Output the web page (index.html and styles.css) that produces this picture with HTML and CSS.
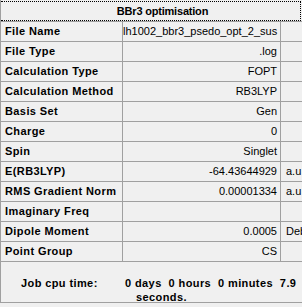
FILE: index.html
```html
<!DOCTYPE html>
<html>
<head>
<meta charset="utf-8">
<link rel="stylesheet" href="styles.css">
</head>
<body>
<div class="panel">
  <div class="header"><div class="focus">BBr3 optimisation</div></div>
  <div class="grid">
    <div class="row"><div class="k">File Name</div><div class="v">lh1002_bbr3_psedo_opt_2_sus</div><div class="u"></div></div>
    <div class="row"><div class="k">File Type</div><div class="v">.log</div><div class="u"></div></div>
    <div class="row"><div class="k">Calculation Type</div><div class="v">FOPT</div><div class="u"></div></div>
    <div class="row"><div class="k">Calculation Method</div><div class="v">RB3LYP</div><div class="u"></div></div>
    <div class="row"><div class="k">Basis Set</div><div class="v">Gen</div><div class="u"></div></div>
    <div class="row"><div class="k">Charge</div><div class="v">0</div><div class="u"></div></div>
    <div class="row"><div class="k">Spin</div><div class="v">Singlet</div><div class="u"></div></div>
    <div class="row"><div class="k">E(RB3LYP)</div><div class="v">-64.43644929</div><div class="u">a.u</div></div>
    <div class="row"><div class="k">RMS Gradient Norm</div><div class="v">0.00001334</div><div class="u">a.u</div></div>
    <div class="row"><div class="k">Imaginary Freq</div><div class="v"></div><div class="u"></div></div>
    <div class="row"><div class="k">Dipole Moment</div><div class="v">0.0005</div><div class="u">Debye</div></div>
    <div class="row"><div class="k">Point Group</div><div class="v">CS</div><div class="u"></div></div>
  </div>
  <div class="job">
    <div class="job-label">Job cpu time:</div>
    <div class="job-value"><div class="l1">0 days  0 hours  0 minutes  7.9</div><div class="l2">seconds.</div></div>
  </div>
</div>
</body>
</html>
```

FILE: styles.css
```css
html, body {
  margin: 0;
  padding: 0;
  background: #f0f0f0;
  overflow: hidden;
}
body {
  width: 302px;
  height: 307px;
  font-family: "Liberation Sans", Arial, sans-serif;
  font-size: 11px;
  color: #000;
}
.panel {
  width: 302px;
  overflow: hidden;
  border-left: 1px solid #a0a0a0;
  border-bottom: 1px solid #a0a0a0;
  box-sizing: border-box;
}
.header {
  height: 21px;
  padding: 1px 0 0 0;
  box-sizing: border-box;
}
.focus {
  width: 300px;
  height: 20px;
  box-sizing: border-box;
  border: 1px dotted #000;
  border-left: none;
  font-weight: bold;
  text-align: center;
  line-height: 19px;
  padding-left: 24px;
  letter-spacing: -0.2px;
}
.grid {
  border-top: 1px solid #a0a0a0;
}
.row {
  display: grid;
  grid-template-columns: 122px 158px 40px;
  height: 20px;
  box-sizing: border-box;
  border-bottom: 1px solid #a0a0a0;
  line-height: 19px;
  white-space: nowrap;
}
.k {
  font-weight: bold;
  letter-spacing: 0.4px;
  padding-left: 4px;
  border-right: 1px solid #a0a0a0;
  overflow: hidden;
}
.v {
  text-align: right;
  padding-right: 3px;
  border-right: 1px solid #a0a0a0;
  overflow: hidden;
}
.u {
  padding-left: 5px;
  overflow: hidden;
}
.job {
  height: 40px;
  display: flex;
  font-weight: bold;
  letter-spacing: 0.4px;
  padding-top: 14px;
  box-sizing: border-box;
  line-height: 14px;
  white-space: nowrap;
}
.job-label {
  flex: none;
  width: 124px;
  box-sizing: border-box;
  padding-left: 20px;
}
.job-value {
  flex: none;
}
.l1 {
  white-space: pre;
}
.l2 {
  padding-left: 11px;
}
```
